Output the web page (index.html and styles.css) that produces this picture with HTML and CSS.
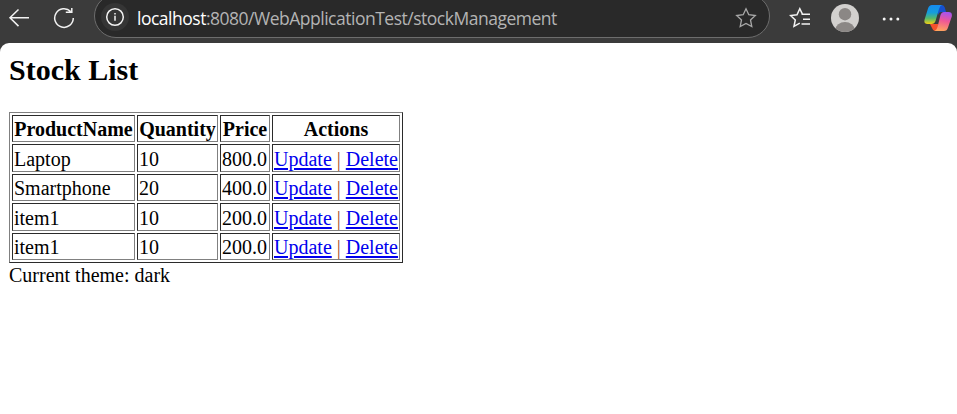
FILE: index.html
```
<!DOCTYPE html>
<html lang="en">
<head>
<meta charset="utf-8">
<title>Stock List</title>
<link rel="stylesheet" href="styles.css">
</head>
<body>
<header class="toolbar">
  <svg class="back" width="22" height="20" viewBox="0 0 22 20"><path d="M10.500 1.500 2 9.800l8.500 8.300M2 9.800H21"/></svg>
  <svg class="reload" width="22" height="22" viewBox="0 0 22 22"><path d="M17.700 4.600A9.300 9.300 0 1 0 20.300 11M12.800 5.200H18.800V1"/></svg>
  <div class="address">
    <span class="info"><svg width="20" height="20" viewBox="0 0 20 20"><circle cx="10" cy="10" r="8.300"/><path d="M10 8.800v4.900M10 6v1.400"/></svg></span>
    <span class="url"><b>localhost</b>:8080/WebApplicationTest/stockManagement</span>
    <svg class="star" width="22" height="22" viewBox="0 0 22 22"><path d="M11 1.700 13.800 7.700 20.300 8.500 15.500 13 16.800 19.600 11 16.400 5.200 19.600 6.500 13 1.700 8.500 8.200 7.700Z"/></svg>
  </div>
  <svg class="favorites" width="22" height="22" viewBox="0 0 22 22"><path d="M13.300 6.800 10.800 1.700 8 7.700 1.500 8.500 6.300 13 5 19.300 10.800 16.100M12.500 7.300H21M14 12.200H21M12.500 17H21"/></svg>
  <svg class="avatar" width="28" height="28" viewBox="0 0 28 28"><clipPath id="disc"><circle cx="14" cy="14" r="14"/></clipPath><g clip-path="url(#disc)"><path fill="#d2d0ce" d="M0 0h28v28H0z"/><circle cx="14" cy="10.200" r="6.200" fill="#8b8785"/><ellipse cx="14" cy="25.500" rx="9.500" ry="7.500" fill="#8b8785"/></g></svg>
  <svg class="more" width="18" height="6" viewBox="0 0 18 6"><circle cx="2.200" cy="3" r="1.500"/><circle cx="9" cy="3" r="1.500"/><circle cx="15.800" cy="3" r="1.500"/></svg>
  <svg class="copilot" width="28" height="26" viewBox="0 0 28 26">
    <defs>
      <linearGradient id="cool" x1="0" y1="0" x2="0" y2="1"><stop offset="0" stop-color="#168bf0"/><stop offset=".4" stop-color="#159edb"/><stop offset=".7" stop-color="#55b96b"/><stop offset="1" stop-color="#f3cf13"/></linearGradient>
      <linearGradient id="warm" x1=".6" y1="0" x2=".4" y2="1"><stop offset="0" stop-color="#a653f0"/><stop offset=".45" stop-color="#ef5796"/><stop offset="1" stop-color="#ffa45d"/></linearGradient>
    </defs>
    <path fill="#1650cf" d="M13 0h5q2 0 2.800 2.500L22 7h-5q-2 0-3 3Z"/>
    <path fill="#f4512c" d="M6 19h8l1 7h-4q-2 0-3-3Z"/>
    <path fill="url(#cool)" d="M8 0h10q-2 .5-3 4l-3.500 12q-1 3-4 3H3.500Q-.5 19 .6 14.500L4 3.500Q5 0 8 0Z"/>
    <path fill="url(#warm)" d="M20 7h4.500q4 0 3.300 4.500L24 22.500Q23 26 20 26H10q2.500-.5 3.500-4L16.500 10q1-3 3.500-3Z"/>
  </svg>
</header>
<main class="page">
  <h2>Stock List</h2>
  <table>
    <colgroup><col class="name"><col class="quantity"><col class="price"><col class="actions"></colgroup>
    <tr><th>ProductName</th><th>Quantity</th><th>Price</th><th>Actions</th></tr>
    <tr class="tall"><td>Laptop</td><td>10</td><td>800.0</td><td><a href="#">Update</a> <i>|</i> <a href="#">Delete</a></td></tr>
    <tr><td>Smartphone</td><td>20</td><td>400.0</td><td><a href="#">Update</a> <i>|</i> <a href="#">Delete</a></td></tr>
    <tr class="tall"><td>item1</td><td>10</td><td>200.0</td><td><a href="#">Update</a> <i>|</i> <a href="#">Delete</a></td></tr>
    <tr><td>item1</td><td>10</td><td>200.0</td><td><a href="#">Update</a> <i>|</i> <a href="#">Delete</a></td></tr>
  </table>
  <p>Current theme: dark</p>
</main>
</body>
</html>
```
FILE: styles.css
```
* { box-sizing: border-box; }
body { margin: 0; height: 414px; overflow: hidden; background: #3b3b3b; }
svg { flex: none; display: block; }
.toolbar { display: flex; align-items: center; height: 43px; padding: 0 5px 7px 8px; }
.back, .reload, .info svg, .favorites { fill: none; stroke: #f2f2f2; stroke-width: 1.500; }
.back { margin-top: -1px; }
.reload { margin-left: 23px; }
.address { display: flex; align-items: center; flex: none; width: 676px; height: 44px; margin: -4px 0 0 19px; padding: 2px 12px 0 6px; border: 1px solid #6d6d6d; border-radius: 22px; background: #292929; }
.info { display: flex; align-items: center; justify-content: center; width: 28px; height: 28px; border-radius: 50%; background: #353535; }
.url { margin: 2px 0 0 8px; font: 17.500px/24px "Open Sans", sans-serif; color: #b4b4b4; white-space: nowrap; letter-spacing: -0.490px; }
.url b { font-weight: 400; color: #fff; }
.star { margin: 2px 0 0 auto; fill: none; stroke: #a8a8a8; stroke-width: 1.300; }
.favorites { margin-left: 19px; }
.avatar { margin-left: 20px; }
.more { margin: 2px 0 0 23px; fill: #f5f5f5; }
.copilot { margin-left: auto; }
.page { height: 371px; padding: 10px 9px 0; border-radius: 9px 9px 0 0; background: #fff; font: 20px/22px "Liberation Serif", serif; color: #000; }
h2 { margin: 0 0 25px; font-size: 30px; line-height: 34px; }
table { table-layout: fixed; width: 394px; border: 1px solid; border-color: #808080 #2b2b2b #2b2b2b #808080; border-spacing: 2px; }
.name { width: 123px; }
.quantity { width: 81px; }
.price { width: 50px; }
.actions { width: 128px; }
tr { height: 27px; }
.tall { height: 28px; }
th, td { padding: 0 1px; border: 1px solid; border-color: #2b2b2b #808080 #808080 #2b2b2b; white-space: nowrap; }
td { padding-top: 1px; }
th { padding-left: 0; padding-right: 0; }
a { color: #0000ee; text-decoration-thickness: 2px; text-underline-offset: 2px; }
i { font-style: normal; color: #a34b23; }
p { margin: 1px 0 0; }
```
